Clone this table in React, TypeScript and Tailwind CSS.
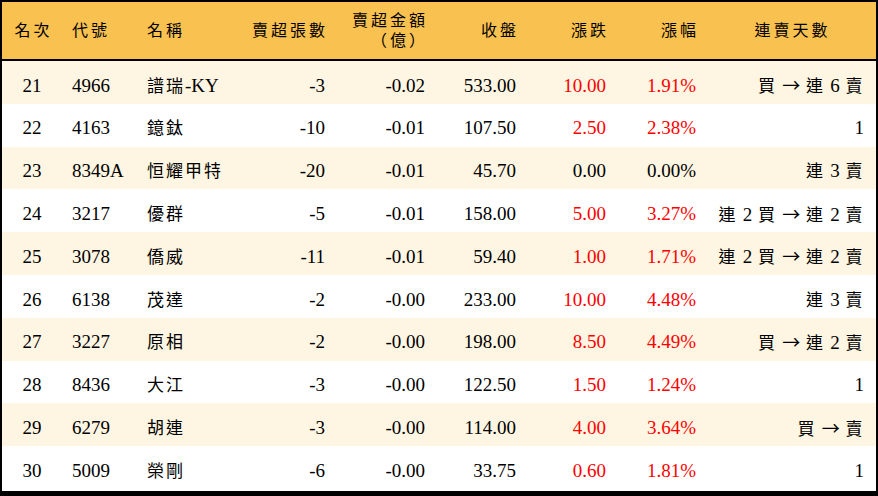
const rows = [
  { rank: 21, code: '4966', name: '譜瑞-KY', vol: '-3', amt: '-0.02', close: '533.00', chg: '10.00', pct: '1.91%', days: '買 → 連 6 賣' },
  { rank: 22, code: '4163', name: '鐿鈦', vol: '-10', amt: '-0.01', close: '107.50', chg: '2.50', pct: '2.38%', days: '1' },
  { rank: 23, code: '8349A', name: '恒耀甲特', vol: '-20', amt: '-0.01', close: '45.70', chg: '0.00', pct: '0.00%', days: '連 3 賣' },
  { rank: 24, code: '3217', name: '優群', vol: '-5', amt: '-0.01', close: '158.00', chg: '5.00', pct: '3.27%', days: '連 2 買 → 連 2 賣' },
  { rank: 25, code: '3078', name: '僑威', vol: '-11', amt: '-0.01', close: '59.40', chg: '1.00', pct: '1.71%', days: '連 2 買 → 連 2 賣' },
  { rank: 26, code: '6138', name: '茂達', vol: '-2', amt: '-0.00', close: '233.00', chg: '10.00', pct: '4.48%', days: '連 3 賣' },
  { rank: 27, code: '3227', name: '原相', vol: '-2', amt: '-0.00', close: '198.00', chg: '8.50', pct: '4.49%', days: '買 → 連 2 賣' },
  { rank: 28, code: '8436', name: '大江', vol: '-3', amt: '-0.00', close: '122.50', chg: '1.50', pct: '1.24%', days: '1' },
  { rank: 29, code: '6279', name: '胡連', vol: '-3', amt: '-0.00', close: '114.00', chg: '4.00', pct: '3.64%', days: '買 → 賣' },
  { rank: 30, code: '5009', name: '榮剛', vol: '-6', amt: '-0.00', close: '33.75', chg: '0.60', pct: '1.81%', days: '1' },
];

const cols = 'grid grid-cols-[60px_75px_100px_98px_100px_91px_90px_90px_170px]';

// 連賣天數: CJK in 17px, digits in serif, arrow drawn wide
function Days({ text }: { text: string }) {
  return (
    <>
      {text.split(/(\d+|→)/).map((p, j) => {
        if (p === '→') {
          return (
            <span key={j} className="text-[18px] tracking-normal" style={{ fontFamily: '"Noto Sans CJK TC", sans-serif' }}>
              →
            </span>
          );
        }
        if (/\d/.test(p)) {
          return <span key={j} className="text-[19px] tracking-normal">{p}</span>;
        }
        return <span key={j}>{p}</span>;
      })}
    </>
  );
}

export default function App() {
  return (
    <div
      className="w-[878px] h-[496px] border-2 border-b-[5px] border-black bg-white text-black overflow-hidden"
      style={{ fontFamily: '"Liberation Serif", "Noto Sans CJK TC", serif' }}
    >
      <div className={`${cols} h-[59px] bg-[#f8c150] border-b-2 border-black items-center text-[16px] tracking-[3px]`}>
        <div className="text-center pl-[3px]">名次</div>
        <div className="pl-[10px]">代號</div>
        <div className="pl-[10px]">名稱</div>
        <div className="text-right pr-[7px]">賣超張數</div>
        <div className="text-right pr-[7px] leading-[20px]">
          <div>賣超金額</div>
          <div>（億）</div>
        </div>
        <div className="text-right pr-[7px]">收盤</div>
        <div className="text-right pr-[7px]">漲跌</div>
        <div className="text-right pr-[7px]">漲幅</div>
        <div className="text-center pl-[3px]">連賣天數</div>
      </div>
      {rows.map((r, i) => (
        <div
          key={r.rank}
          className={`${cols} h-[42.8px] pt-[7px] items-center text-[19px] ${i % 2 === 0 ? 'bg-[#fef5e2]' : 'bg-white'}`}
        >
          <div className="text-center">{r.rank}</div>
          <div className="pl-[10px]">{r.code}</div>
          <div className="pl-[10px] whitespace-nowrap">
            <span className="text-[17px] tracking-[2px]">{r.name.replace('-KY', '')}</span>
            {r.name.includes('-KY') && <span>-KY</span>}
          </div>
          <div className="text-right pr-[10px]">{r.vol}</div>
          <div className="text-right pr-[10px]">{r.amt}</div>
          <div className="text-right pr-[10px]">{r.close}</div>
          <div className={`text-right pr-[10px] ${r.chg === '0.00' ? '' : 'text-[#ff0000]'}`}>{r.chg}</div>
          <div className={`text-right pr-[10px] ${r.pct === '0.00%' ? '' : 'text-[#ff0000]'}`}>{r.pct}</div>
          <div className="text-right pr-[12px] whitespace-pre text-[17px] tracking-[1.5px]">
            <Days text={r.days} />
          </div>
        </div>
      ))}
    </div>
  );
}
